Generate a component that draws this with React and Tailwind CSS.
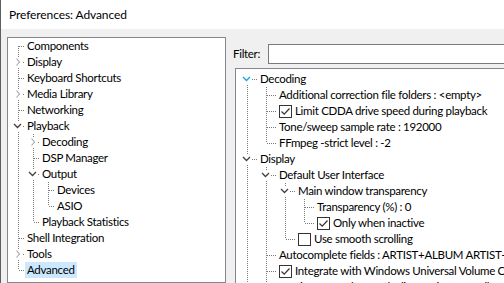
import React from 'react';

const LEFT_TREE = [
  { t: 'Components', l: 0 },
  { t: 'Display', l: 0, c: 'closed' },
  { t: 'Keyboard Shortcuts', l: 0 },
  { t: 'Media Library', l: 0, c: 'closed' },
  { t: 'Networking', l: 0 },
  { t: 'Playback', l: 0, c: 'open' },
  { t: 'Decoding', l: 1, c: 'closed' },
  { t: 'DSP Manager', l: 1 },
  { t: 'Output', l: 1, c: 'open' },
  { t: 'Devices', l: 2 },
  { t: 'ASIO', l: 2 },
  { t: 'Playback Statistics', l: 1 },
  { t: 'Shell Integration', l: 0 },
  { t: 'Tools', l: 0, c: 'closed' },
  { t: 'Advanced', l: 0, selected: true },
];

const RIGHT_TREE = [
  { t: 'Decoding', l: 0, c: 'open', hot: true },
  { t: 'Additional correction file folders : <empty>', l: 1 },
  { t: 'Limit CDDA drive speed during playback', l: 1, box: true },
  { t: 'Tone/sweep sample rate : 192000', l: 1 },
  { t: 'FFmpeg -strict level : -2', l: 1 },
  { t: 'Display', l: 0, c: 'open' },
  { t: 'Default User Interface', l: 1, c: 'open' },
  { t: 'Main window transparency', l: 2, c: 'open' },
  { t: 'Transparency (%) : 0', l: 3 },
  { t: 'Only when inactive', l: 3, box: true },
  { t: 'Use smooth scrolling', l: 2, box: false },
  { t: 'Autocomplete fields : ARTIST+ALBUM ARTIST+ALBUM+TITLE', l: 1 },
  { t: 'Integrate with Windows Universal Volume Control', l: 1, box: true },
  { t: 'Maximum number of playlist entries to scroll to', l: 1 },
  { t: 'Tagging', l: 0, c: 'closed' },
];

// work out which connector lines each row needs
function withLines(items) {
  return items.map((it, i) => {
    const hasNext = (lvl, from) => {
      for (let j = from + 1; j < items.length; j++) {
        if (items[j].l < lvl) return false;
        if (items[j].l === lvl) return true;
      }
      return false;
    };
    const guides = [];
    for (let k = 0; k < it.l; k++) {
      let a = i;
      while (a >= 0 && items[a].l !== k) a--;
      guides.push(hasNext(k, a));
    }
    return { ...it, first: i === 0, next: hasNext(it.l, i), guides };
  });
}

const LINE = '#7a7a7a';

function Chevron({ x, kind, hot }) {
  if (kind === 'closed') {
    return <path d={`M${x - 1.5} 4.5 L${x + 1.5} 8 L${x - 1.5} 11.5`} fill="none" stroke="#a6a6a6" strokeWidth="1.1" />;
  }
  return <path d={`M${x - 4} 6 L${x - 0.5} 9.5 L${x + 3} 6`} fill="none" stroke={hot ? '#1ba1e2' : '#404040'} strokeWidth="1.3" />;
}

function Lines({ row, indent }) {
  const off = 8;
  const w = (row.l + 1) * indent;
  const own = row.l * indent + off;
  return (
    <svg width={w} height={16} className="shrink-0" shapeRendering="crispEdges">
      <g stroke={LINE} strokeDasharray="1 1">
        {row.guides.map((g, k) =>
          g ? <line key={k} x1={k * indent + off + 0.5} y1={0} x2={k * indent + off + 0.5} y2={16} /> : null
        )}
        {!row.first && <line x1={own + 0.5} y1={0} x2={own + 0.5} y2={8} />}
        {row.next && <line x1={own + 0.5} y1={8} x2={own + 0.5} y2={16} />}
        <line x1={own + 1} y1={8.5} x2={w} y2={8.5} />
      </g>
      {row.c && (
        <g shapeRendering="auto">
          <rect x={own - 4} y={3} width={9} height={10} fill="#ffffff" />
          <Chevron x={own} kind={row.c} hot={row.hot} />
        </g>
      )}
    </svg>
  );
}

function CheckBox({ checked }) {
  return (
    <svg width="13" height="13" className="shrink-0 mr-[3px]">
      <rect x="0.5" y="0.5" width="12" height="12" fill="#ffffff" stroke="#333333" />
      {checked && <path d="M2.5 6.5 L5.2 9.2 L10.5 3.5" fill="none" stroke="#333333" strokeWidth="1.2" />}
    </svg>
  );
}

function Tree({ items, indent }) {
  return (
    <div className="flex flex-col">
      {withLines(items).map((row) => (
        <div key={row.t} className="flex h-4 items-center whitespace-nowrap">
          <Lines row={row} indent={indent} />
          <div className={`flex h-4 items-center px-[2px] ${row.selected ? 'bg-[#cce8ff]' : ''}`}>
            {row.box !== undefined && <CheckBox checked={row.box} />}
            <span>{row.t}</span>
          </div>
        </div>
      ))}
    </div>
  );
}

export default function App() {
  return (
    <div className="w-[504px] h-[283px] overflow-hidden flex flex-col bg-[#f0f0f0] border-l border-[#5f5f5f] font-['Lato',sans-serif] text-[11.5px] tracking-[-0.3px] leading-4 text-black">
      <div className="h-[29px] shrink-0 bg-white flex items-center pl-[8px] text-[12px] tracking-[-0.1px]">
        Preferences: Advanced
      </div>
      <div className="flex flex-1 min-h-0">
        <div className="ml-[6px] mt-[8px] w-[219px] shrink-0 bg-white border border-[#828790] pl-[2px]">
          <Tree items={LEFT_TREE} indent={15} />
        </div>
        <div className="ml-[7px] mt-[15px] flex flex-col flex-1 min-w-0 overflow-hidden">
          <div className="flex items-center h-[20px]">
            <span className="w-[35px] shrink-0">Filter:</span>
            <div className="h-[20px] w-[400px] shrink-0 bg-white border border-r-0 border-[#7a7a7a]" />
          </div>
          <div className="ml-[2px] mt-[4px] w-[420px] flex-1 bg-white border border-r-0 border-[#828790] pl-[3px] pt-[2px]">
            <Tree items={RIGHT_TREE} indent={19} />
          </div>
        </div>
      </div>
    </div>
  );
}
